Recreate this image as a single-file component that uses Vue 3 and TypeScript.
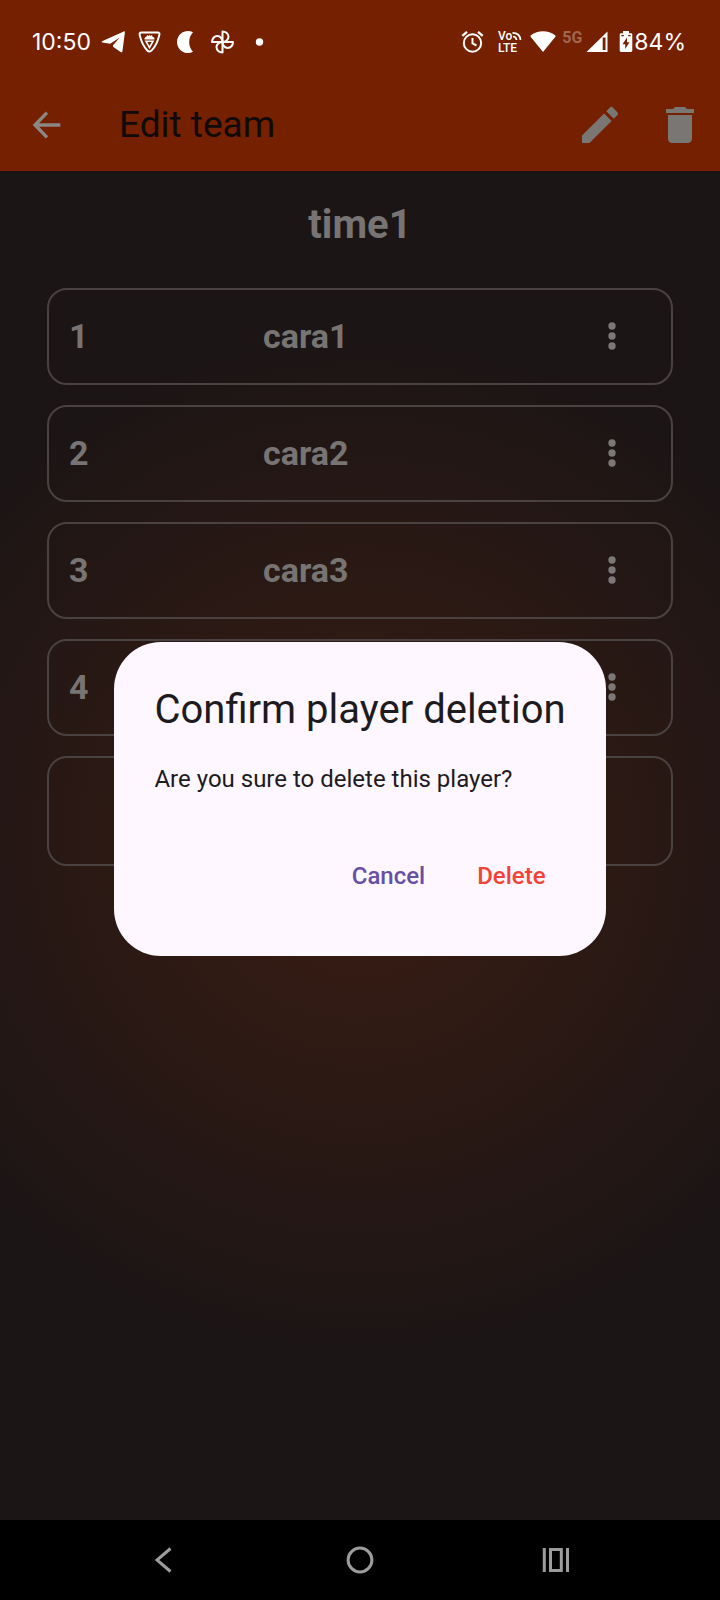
<script setup lang="ts">
import { ref } from 'vue'

interface Player {
  number: number
  name: string
}

const teamName = ref<string>('time1')
const players = ref<Player[]>([
  { number: 1, name: 'cara1' },
  { number: 2, name: 'cara2' },
  { number: 3, name: 'cara3' },
  { number: 4, name: '' },
])
const confirmOpen = ref<boolean>(true)
const selected = ref<number>(4)

function askDelete(n: number): void {
  selected.value = n
  confirmOpen.value = true
}

function cancel(): void {
  confirmOpen.value = false
}

function removePlayer(): void {
  players.value = players.value.filter((p) => p.number !== selected.value)
  confirmOpen.value = false
}
</script>

<template>
  <div class="screen">
    <div class="status">
      <div class="status-left">
        <span class="status-text clock">10:50</span>
        <svg class="s-icon" viewBox="0 0 24 24" aria-hidden="true">
          <path d="M1 11.200 22.800 1.400q1.300-.5 1.100.9l-2.500 19.100q-.4 1.500-1.800.6l-7.200-5-.6-1.500 7-8-9.600 6.200-7.800-1.300q-1.400-.5-.4-1.200z" fill="#fff" />
        </svg>
        <svg class="s-icon" viewBox="0 0 24 24" aria-hidden="true">
          <path d="M4.500 2.600h16q2.800 0 1.700 2.800-2 9-7.300 14.800-2.400 2.600-4.800 0-5.300-5.800-7.300-14.800-.9-2.800 1.700-2.800z" fill="none" stroke="#fff" stroke-width="2" />
          <path d="M7.500 9.500h10v-1q-.3-1.500-2-1.700L15 5l-1.500 1-1-1-1 1L10 5l-.5 1.800q-1.700.2-2 1.700z" fill="#fff" />
          <path d="M9 11.200h7l-3.500 6.400z" fill="none" stroke="#fff" stroke-width="1.600" />
        </svg>
        <svg class="s-icon" viewBox="0 0 24 24" aria-hidden="true">
          <path d="M20 2.200a11 11 0 1 0 0 19.600 14.500 14.500 0 0 1 0-19.600z" fill="#fff" />
        </svg>
        <svg class="s-icon" viewBox="0 0 24 24" aria-hidden="true">
          <g fill="none" stroke="#fff" stroke-width="2" stroke-linejoin="round">
            <path d="M13.500 12V1.500a6 5.250 0 0 1 0 10.500z" />
            <path d="M13.500 12H24a5.250 6 0 0 1-10.500 0z" />
            <path d="M13.500 12v10.500a6 5.250 0 0 1 0-10.500z" />
            <path d="M13.500 12H3a5.250 6 0 0 1 10.500 0z" />
          </g>
        </svg>
        <svg class="s-icon" viewBox="0 0 24 24" aria-hidden="true">
          <circle cx="14.500" cy="12" r="3.700" fill="#fff" />
        </svg>
      </div>
      <div class="status-right">
        <svg class="s-icon alarm" viewBox="0 0 24 24" aria-hidden="true">
          <g fill="none" stroke="#fff" stroke-width="2">
            <circle cx="12.500" cy="13" r="8.700" />
            <path d="M12.500 8v5.500l4 2" />
            <path d="M2.300 5.800 7 1.900M22.700 5.800 18 1.900" stroke-width="2.400" />
          </g>
        </svg>
        <svg class="s-icon volte" viewBox="0 0 24 24" role="img" aria-label="VoLTE">
          <text x="0" y="10" class="tiny">Vo</text>
          <text x="0" y="21.800" class="tiny">LTE</text>
          <g fill="none" stroke="#fff" stroke-width="1.700">
            <path d="M15 6.500q3.300.2 3.500 3.500" />
            <path d="M14.500 2.800q7.600.2 8 7.200" />
          </g>
        </svg>
        <svg class="wifi" viewBox="0 0 26 24" aria-hidden="true">
          <path d="M13 22 .6 6.800Q.2 5.900.9 5.300 6.200 1.200 13 1.200t12.100 4.100q.7.600.3 1.500z" fill="#fff" />
        </svg>
        <span class="net">5G</span>
        <svg class="signal" viewBox="0 0 22 24" aria-hidden="true">
          <path fill-rule="evenodd" d="M21.500 1.500V22H.5zM19.500 7.500h-2.800V20h2.800z" fill="#fff" />
        </svg>
        <svg class="battery" viewBox="0 0 14 24" aria-hidden="true">
          <path fill-rule="evenodd" d="M4 1h6v2.300h2q1.300 0 1.300 1.300v16q0 1.400-1.300 1.400H2Q.7 22 .7 20.600v-16q0-1.300 1.300-1.300h2zM8 7.600 3.500 14.200h2.700v4.800L10.500 12.300H8zM2.300 5v1.300h2.500V5zM9.200 5v1.300h2.500V5z" fill="#fff" />
        </svg>
        <span class="status-text">84%</span>
      </div>
    </div>

    <header class="appbar">
      <button class="icon-btn back" type="button" aria-label="Back">
        <svg viewBox="0 0 24 24" class="i40">
          <path d="M20 12H5M12 4.600 4.800 12l7.200 7.400" fill="none" stroke="#8c8785" stroke-width="2" />
        </svg>
      </button>
      <h1 class="bar-title">Edit team</h1>
      <div class="bar-actions">
        <button class="icon-btn" type="button" aria-label="Edit">
          <svg viewBox="0 0 24 24" class="i48">
            <path fill="#7a7674" d="M3 17.250V21h3.750L17.810 9.940l-3.750-3.750L3 17.250zM20.710 7.040a.996.996 0 0 0 0-1.410l-2.340-2.340a.996.996 0 0 0-1.410 0l-1.830 1.830 3.750 3.750 1.830-1.830z" />
          </svg>
        </button>
        <button class="icon-btn" type="button" aria-label="Delete team">
          <svg viewBox="0 0 24 24" class="i48">
            <path fill="#7a7674" d="M6 19c0 1.100.9 2 2 2h8c1.100 0 2-.9 2-2V7H6v12zM19 4h-3.500l-1-1h-5l-1 1H5v2h14V4z" />
          </svg>
        </button>
      </div>
    </header>

    <main class="content">
      <h2 class="team">{{ teamName }}</h2>
      <ul class="list">
        <li v-for="p in players" :key="p.number" class="row">
          <span class="num">{{ p.number }}</span>
          <span class="name">{{ p.name }}</span>
          <button class="icon-btn more" type="button" :aria-label="'Options for player ' + p.number" @click="askDelete(p.number)">
            <svg viewBox="0 0 24 24" class="i40">
              <g fill="#7b7877">
                <circle cx="12" cy="6" r="2.200" />
                <circle cx="12" cy="12" r="2.200" />
                <circle cx="12" cy="18" r="2.200" />
              </g>
            </svg>
          </button>
        </li>
        <li class="row empty"></li>
      </ul>
    </main>

    <nav class="sysnav">
      <button class="icon-btn" type="button" aria-label="System back">
        <svg viewBox="0 0 40 40" class="i40">
          <path d="M26.500 8.500 13 20l13.500 11.500" fill="none" stroke="#9c9c9c" stroke-width="3" />
        </svg>
      </button>
      <button class="icon-btn" type="button" aria-label="Home">
        <svg viewBox="0 0 40 40" class="i40">
          <circle cx="20" cy="20" r="11.900" fill="none" stroke="#9c9c9c" stroke-width="3" />
        </svg>
      </button>
      <button class="icon-btn" type="button" aria-label="Recent apps">
        <svg viewBox="0 0 40 40" class="i40">
          <path d="M8.300 8v24M31.500 8v24" stroke="#9c9c9c" stroke-width="3" />
          <path d="M14.500 9.500h10.800v21H14.500z" fill="none" stroke="#9c9c9c" stroke-width="3" />
        </svg>
      </button>
    </nav>

    <div v-if="confirmOpen" class="overlay">
      <section class="dialog" role="alertdialog" aria-labelledby="dlg-title" aria-describedby="dlg-body">
        <h2 id="dlg-title" class="dlg-title">Confirm player deletion</h2>
        <p id="dlg-body" class="dlg-body">Are you sure to delete this player?</p>
        <div class="dlg-actions">
          <button class="text-btn" type="button" @click="cancel">Cancel</button>
          <button class="text-btn danger" type="button" @click="removePlayer">Delete</button>
        </div>
      </section>
    </div>
  </div>
</template>

<style>
body {
  margin: 0;
  background: #1c1515;
}
</style>

<style scoped>
.screen {
  position: relative;
  display: flex;
  flex-direction: column;
  min-height: 100vh;
  font-family: Roboto, "Liberation Sans", sans-serif;
  background: #1c1515;
}

svg {
  display: block;
  flex: none;
  overflow: visible;
}

.icon-btn {
  display: flex;
  align-items: center;
  justify-content: center;
  padding: 0;
  border: 0;
  background: none;
}

.i40 {
  width: 40px;
  height: 40px;
}

.i48 {
  width: 48px;
  height: 48px;
}

.status {
  display: flex;
  justify-content: space-between;
  align-items: center;
  box-sizing: border-box;
  height: 78px;
  padding: 6px 34px 0 32px;
  background: #752000;
  color: #fff;
}

.status-left,
.status-right {
  display: flex;
  align-items: center;
}

.status-left {
  gap: 12px;
}

.status-text {
  font-family: Inter, Roboto, sans-serif;
  font-size: 23px;
  line-height: 28px;
}

.clock {
  width: 57px;
  white-space: nowrap;
}

.s-icon {
  width: 24px;
  height: 24px;
}

.volte {
  margin-left: 14px;
}

.tiny {
  font-family: Roboto, sans-serif;
  font-size: 12px;
  font-weight: 500;
  fill: #fff;
}

.wifi {
  width: 26px;
  height: 24px;
  margin-left: 8px;
}

.net {
  align-self: flex-start;
  width: 24px;
  margin-left: 6px;
  font-size: 16px;
  font-weight: 700;
  line-height: 20px;
  color: #a06650;
}

.signal {
  width: 22px;
  height: 24px;
}

.battery {
  width: 14px;
  height: 24px;
  margin: 0 1px 0 11px;
}

.appbar {
  display: flex;
  align-items: center;
  height: 93px;
  padding: 0 16px 0 27px;
  background: #752000;
}

.bar-title {
  flex: 1;
  margin: 0 0 0 52px;
  font-size: 37px;
  font-weight: 400;
  line-height: 48px;
  color: #100a0b;
}

.bar-actions {
  display: flex;
  gap: 32px;
}

.content {
  flex: 1;
  padding: 27px 47px;
  background: radial-gradient(circle 504px at 50% 50%, #3b1d13, #1c1515);
}

.team {
  margin: 0 0 36px;
  font-size: 40px;
  font-weight: 700;
  line-height: 54px;
  text-align: center;
  color: #777473;
}

.list {
  display: flex;
  flex-direction: column;
  gap: 20px;
  margin: 0;
  padding: 0;
  list-style: none;
}

.row {
  display: grid;
  grid-template-columns: 194px 1fr 40px;
  align-items: center;
  box-sizing: border-box;
  height: 97px;
  padding: 0 39px 2px 20px;
  border: 2px solid #4a4241;
  border-radius: 20px;
  font-size: 34px;
  font-weight: 700;
  line-height: 40px;
  color: #777473;
}

.empty {
  height: 110px;
}

.sysnav {
  display: flex;
  justify-content: center;
  align-items: center;
  gap: 156px;
  height: 80px;
  background: #000;
}

.overlay {
  position: absolute;
  inset: 78px 0 80px;
  display: flex;
  align-items: center;
  justify-content: center;
}

.dialog {
  padding: 40px;
  border-radius: 47px;
  background: #fef7ff;
  color: #1d1b20;
}

.dlg-title {
  margin: 0 0 25px;
  font-size: 40px;
  font-weight: 400;
  line-height: 56px;
}

.dlg-body {
  margin: 0 0 40px;
  font-size: 24px;
  line-height: 33px;
}

.dlg-actions {
  display: flex;
  justify-content: flex-end;
  gap: 12px;
}

.text-btn {
  height: 80px;
  padding: 0 20px;
  border: 0;
  background: none;
  font-family: inherit;
  font-size: 24px;
  font-weight: 500;
  color: #6750a4;
}

.danger {
  color: #f44336;
}
</style>
